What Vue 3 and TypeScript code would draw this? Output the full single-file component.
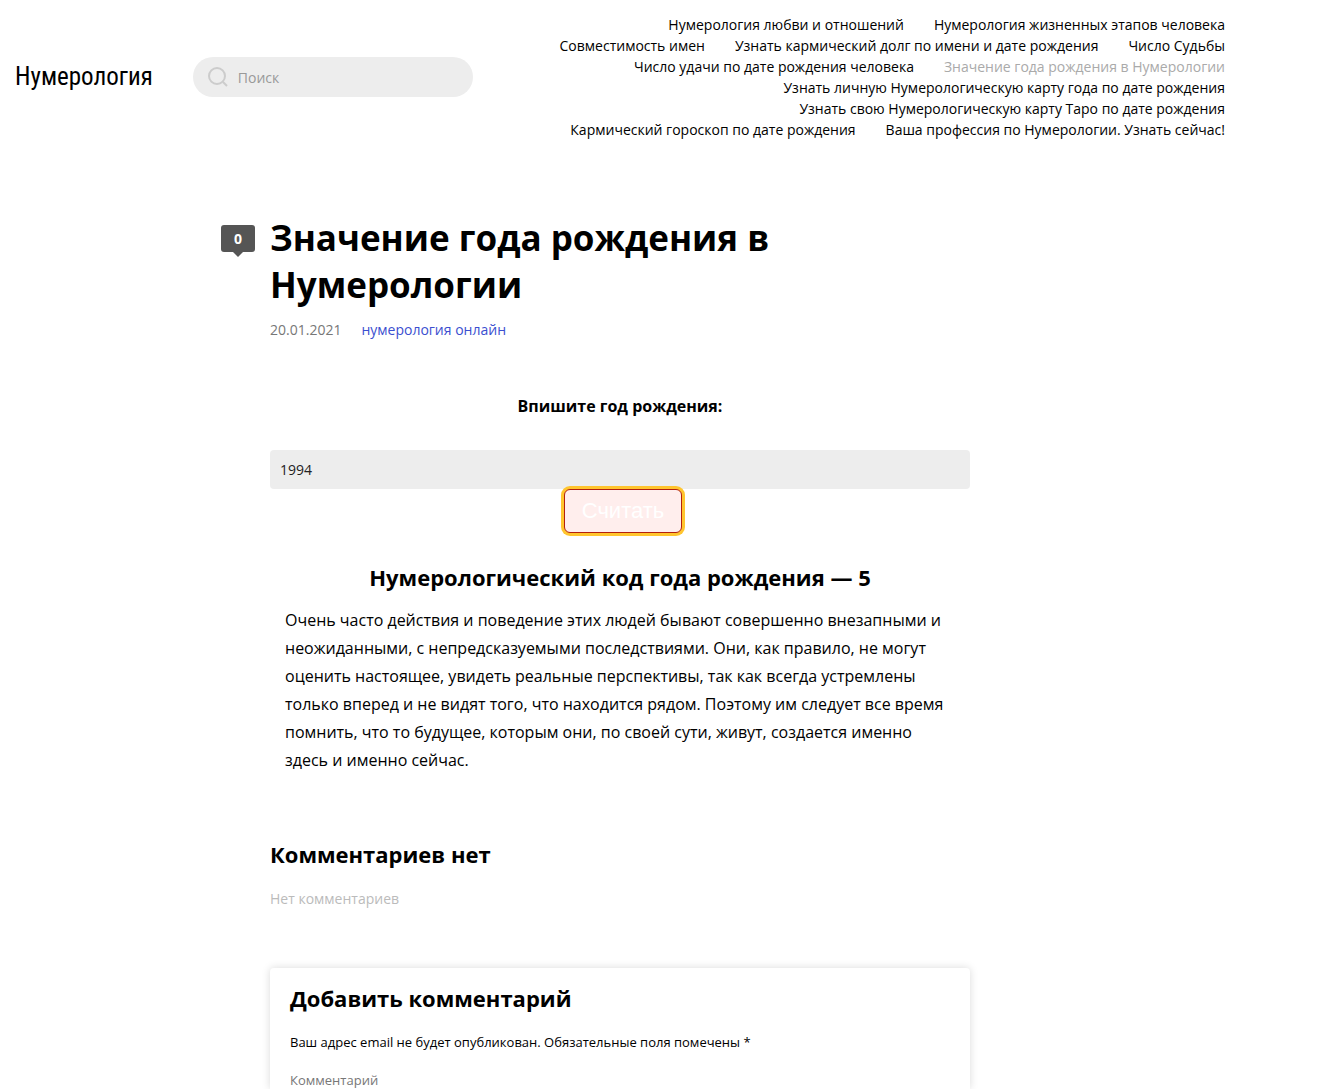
<script setup lang="ts">
import { ref } from 'vue'

interface NavItem {
  label: string
  current?: boolean
}

const nav: NavItem[] = [
  { label: 'Нумерология любви и отношений' },
  { label: 'Нумерология жизненных этапов человека' },
  { label: 'Совместимость имен' },
  { label: 'Узнать кармический долг по имени и дате рождения' },
  { label: 'Число Судьбы' },
  { label: 'Число удачи по дате рождения человека' },
  { label: 'Значение года рождения в Нумерологии', current: true },
  { label: 'Узнать личную Нумерологическую карту года по дате рождения' },
  { label: 'Узнать свою Нумерологическую карту Таро по дате рождения' },
  { label: 'Кармический гороскоп по дате рождения' },
  { label: 'Ваша профессия по Нумерологии. Узнать сейчас!' },
]

const query = ref('')
const year = ref('1994')
const code = ref(5)
const comment = ref('')

function digitSum(text: string): number {
  return [...text].reduce((sum, ch) => sum + (Number(ch) || 0), 0)
}

function calculate(): void {
  let sum = digitSum(year.value)
  while (sum > 9) sum = digitSum(String(sum))
  code.value = sum
}
</script>

<template>
  <div class="page">
    <header class="header">
      <a class="logo" href="#">Нумерология</a>
      <form class="search" role="search" @submit.prevent>
        <svg class="search-icon" viewBox="0 0 20 20" aria-hidden="true">
          <circle cx="9" cy="9" r="8" />
          <path d="M15 15l4 4" />
        </svg>
        <input v-model="query" type="text" placeholder="Поиск" aria-label="Поиск" />
      </form>
      <nav class="nav">
        <a v-for="item in nav" :key="item.label" href="#" :class="{ current: item.current }">{{ item.label }}</a>
      </nav>
    </header>

    <main class="content">
      <article>
        <div class="heading">
          <a class="count" href="#comments">0</a>
          <h1>Значение года рождения в Нумерологии</h1>
        </div>
        <div class="meta">
          <time datetime="2021-01-20">20.01.2021</time>
          <a href="#">нумерология онлайн</a>
        </div>
        <form class="calc" @submit.prevent="calculate">
          <label for="year">Впишите год рождения:</label>
          <input id="year" v-model="year" type="text" />
          <button type="submit">Считать</button>
        </form>
        <section class="result">
          <h2>Нумерологический код года рождения — {{ code }}</h2>
          <p>
            Очень часто действия и поведение этих людей бывают совершенно внезапными и неожиданными, с
            непредсказуемыми последствиями. Они, как правило, не могут оценить настоящее, увидеть реальные
            перспективы, так как всегда устремлены только вперед и не видят того, что находится рядом. Поэтому им
            следует все время помнить, что то будущее, которым они, по своей сути, живут, создается именно здесь и
            именно сейчас.
          </p>
        </section>
      </article>

      <section id="comments" class="comments">
        <h2>Комментариев нет</h2>
        <p>Нет комментариев</p>
      </section>

      <form class="respond" @submit.prevent>
        <h2>Добавить комментарий</h2>
        <p>Ваш адрес email не будет опубликован. Обязательные поля помечены *</p>
        <textarea v-model="comment" rows="1" placeholder="Комментарий" aria-label="Комментарий"></textarea>
      </form>
    </main>
  </div>
</template>

<style>
body {
  margin: 0;
  background: #fff;
}
</style>

<style scoped>
.page {
  box-sizing: border-box;
  display: flex;
  flex-direction: column;
  max-width: 1240px;
  min-height: 100vh;
  font: 14px/21px 'Open Sans', sans-serif;
  color: #000;
}
h1,
h2,
p {
  margin: 0;
}
a {
  color: inherit;
  text-decoration: none;
}
input,
textarea,
button {
  box-sizing: border-box;
  margin: 0;
  border: 0;
  outline: 0;
  font: inherit;
}
.header {
  display: flex;
  align-items: center;
  padding: 14px 15px;
}
.logo {
  font: 25px/32px 'Roboto Condensed', 'Liberation Sans Narrow', Roboto, sans-serif;
}
.search {
  display: flex;
  align-items: center;
  box-sizing: border-box;
  flex: 0 0 280px;
  height: 40px;
  margin-left: 40px;
  padding: 0 15px;
  gap: 10px;
  border-radius: 20px;
  background: #ededed;
}
.search-icon {
  flex: none;
  width: 20px;
  height: 20px;
  fill: none;
  stroke: #ccc;
  stroke-width: 2;
}
.search input {
  flex: 1;
  min-width: 0;
  padding: 0;
  background: none;
}
.search input::placeholder {
  color: #999;
  opacity: 1;
}
.nav {
  display: flex;
  flex-wrap: wrap;
  justify-content: flex-end;
  column-gap: 30px;
  flex: 0 1 700px;
  margin-left: auto;
}
.nav .current {
  color: #aaa;
}
.content {
  display: flex;
  flex-direction: column;
  flex: 1;
  width: 700px;
  max-width: 100%;
  margin: 60px auto 0;
}
.heading {
  position: relative;
}
.count {
  position: absolute;
  top: 11px;
  right: calc(100% + 15px);
  width: 34px;
  border-radius: 3px;
  background: #555;
  color: #fff;
  font-size: 14px;
  font-weight: 700;
  line-height: 27px;
  text-align: center;
}
.count::after {
  content: '';
  position: absolute;
  top: 100%;
  left: 12px;
  border: 5px solid transparent;
  border-top-color: #555;
  border-bottom: 0;
}
h1 {
  max-width: 600px;
  font-size: 35px;
  line-height: 47px;
}
h2 {
  font-size: 22px;
  line-height: 30px;
}
.meta {
  display: flex;
  gap: 20px;
  margin-top: 11px;
  color: #777;
}
.meta a {
  color: #3b4fd0;
}
.calc {
  display: flex;
  flex-direction: column;
  margin-top: 52px;
}
.calc label {
  font-size: 16px;
  font-weight: 700;
  line-height: 28px;
  text-align: center;
}
.calc input {
  height: 39px;
  margin-top: 30px;
  padding: 0 10px;
  border-radius: 4px;
  background: #ededed;
  color: #222;
}
.calc button {
  align-self: center;
  height: 44px;
  margin-left: 6px;
  padding: 0 17px;
  border: 1px solid #b3200e;
  border-radius: 6px;
  background: #ffeeed;
  box-shadow: 0 0 0 3px #ffc52e;
  color: #fff;
  font: 22px/40px 'Liberation Sans', Arial, sans-serif;
}
.result {
  margin-top: 29px;
}
.result h2 {
  text-align: center;
}
.result p {
  margin-top: 14px;
  padding: 0 15px;
  font-size: 16px;
  line-height: 28px;
}
.comments {
  margin-top: 65px;
}
.comments p {
  margin-top: 19px;
  color: #bbb;
}
.respond {
  display: flex;
  flex-direction: column;
  flex: 1;
  margin-top: 59px;
  padding: 15px 20px 0;
  border-radius: 4px 4px 0 0;
  box-shadow: 0 0 8px rgba(0, 0, 0, 0.15);
  font-size: 13px;
  line-height: 18px;
}
.respond p {
  margin-top: 20px;
}
.respond textarea {
  display: block;
  width: 100%;
  height: 18px;
  margin-top: 20px;
  padding: 0;
  background: none;
  resize: none;
  overflow: hidden;
}
.respond textarea::placeholder {
  color: #777;
  opacity: 1;
}
</style>
